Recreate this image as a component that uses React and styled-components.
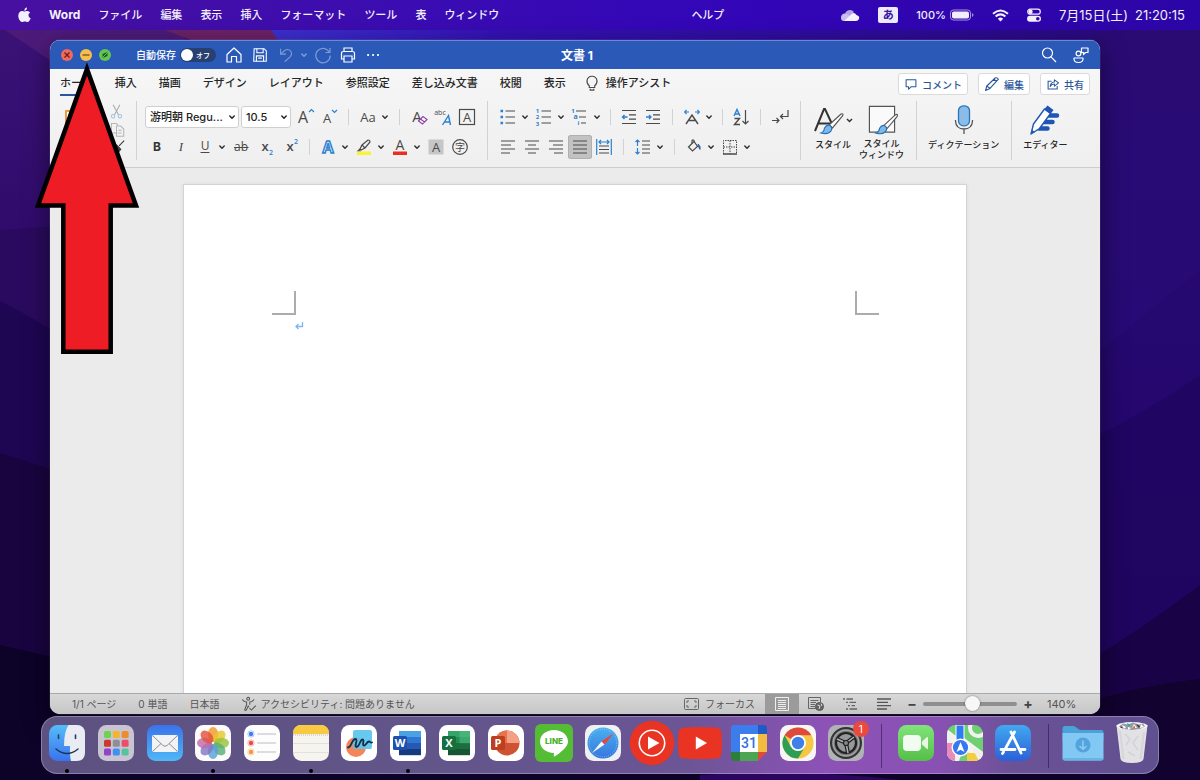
import React, { useState } from "react";
import styled, { createGlobalStyle, css } from "styled-components";

const GlobalStyle = createGlobalStyle`
  * {
    box-sizing: border-box;
  }

  body {
    margin: 0;
    background: #12042f;
    font-family: Inter, "Noto Sans CJK JP", sans-serif;
  }

  button, select, input {
    font-family: inherit;
    margin: 0;
  }
`;

const DARK = "#4a4a4a";
const BLUE = "#2b80d0";
const NAVY = "#2b579a";

/* ---------- desktop ---------- */

const Desktop = styled.div`
  position: relative;
  z-index: 0;
  display: flex;
  flex-direction: column;
  min-height: 100vh;
  overflow: hidden;
`;

const WallpaperSvg = styled.svg`
  position: absolute;
  inset: 0;
  z-index: -1;
  width: 100%;
  height: 100%;
`;

const ArrowSvg = styled.svg`
  position: absolute;
  left: 34px;
  top: 60px;
  pointer-events: none;
`;

/* ---------- menu bar ---------- */

const MenuBar = styled.header`
  display: flex;
  align-items: center;
  justify-content: space-between;
  height: 30px;
  padding: 0 15px 0 18px;
  background: linear-gradient(90deg, #4810a0, #3a0cb2 35%, #3306b8 60%, #2c05a6);
  color: #f3effc;
`;

const MenuGroup = styled.nav`
  display: flex;
  align-items: center;
  gap: 18px;
`;

const MenuButton = styled.button`
  padding: 0;
  border: none;
  background: none;
  color: inherit;
  font-size: ${(p) => (p.$app ? 12 : 11)}px;
  font-weight: ${(p) => (p.$app ? 700 : 500)};
  line-height: 16px;
  white-space: nowrap;
`;

const HelpButton = styled(MenuButton)`
  margin-left: 174px;
`;

const StatusGroup = styled.div`
  display: flex;
  align-items: center;
  gap: 18px;
  font-weight: 500;
  white-space: nowrap;

  svg {
    display: block;
  }
`;

const InputMode = styled.span`
  width: 20px;
  height: 16px;
  border-radius: 2px;
  background: #f0ebfb;
  color: #3a12a8;
  font-family: "Noto Sans CJK JP", sans-serif;
  font-size: 11px;
  font-weight: 700;
  line-height: 15px;
  text-align: center;
`;

const Battery = styled.span`
  display: flex;
  align-items: center;
  gap: 4px;
  font-size: 11px;
`;

const Clock = styled.time`
  display: flex;
  align-items: baseline;
  gap: 7px;
  font-size: 13px;
  font-weight: 400;
  line-height: 16px;
`;

/* ---------- window ---------- */

const Window = styled.main`
  flex: 1;
  display: flex;
  flex-direction: column;
  margin: 10px 100px 2px 50px;
  border-radius: 10px;
  overflow: hidden;
  background: #ebebeb;
  box-shadow: 0 0 1px #c9c4e0, 0 8px 26px rgba(0, 0, 0, 0.5);
`;

const TitleBar = styled.div`
  display: grid;
  grid-template-columns: 1fr auto 1fr;
  align-items: center;
  height: 29px;
  padding: 0 7px 0 11px;
  background: #2b59b8;
  box-shadow: inset 0 1px #6d88cf;
  color: #fff;
`;

const TitleSide = styled.div`
  display: flex;
  align-items: center;
  justify-content: ${(p) => (p.$end ? "flex-end" : "flex-start")};
  gap: ${(p) => p.$gap || 0}px;
`;

const Lights = styled.div`
  display: flex;
  gap: 7px;
  margin-right: 25px;
`;

const Light = styled.button`
  display: block;
  width: 12px;
  height: 12px;
  padding: 0;
  border: none;
  border-radius: 50%;
  background: ${(p) => p.$color};

  svg {
    display: block;
  }
`;

const SaveLabel = styled.label`
  display: flex;
  align-items: center;
  gap: 4px;
  margin-right: 6px;
  font-size: 10px;
  font-weight: 500;
  white-space: nowrap;
`;

const Switch = styled.button`
  display: flex;
  align-items: center;
  gap: 3px;
  width: 36px;
  height: 14px;
  padding: 0 1px;
  border: none;
  border-radius: 7px;
  background: #28406f;
  color: #fff;
  font-size: 7px;
  font-weight: 500;

  &::before {
    content: "";
    width: 12px;
    height: 12px;
    border-radius: 50%;
    background: #fff;
  }
`;

const BarButton = styled.button`
  display: flex;
  align-items: center;
  justify-content: center;
  width: ${(p) => p.$w || 24}px;
  height: 24px;
  padding: 0;
  border: none;
  background: none;
  color: #fff;
  opacity: ${(p) => (p.$dim ? 0.4 : 1)};
`;

const DocTitle = styled.h1`
  margin: 0;
  font-size: 12px;
  font-weight: 700;
`;

/* ---------- ribbon ---------- */

const Ribbon = styled.section`
  border-bottom: 1px solid #cdcdcd;
  background: linear-gradient(#f6f6f6, #efefef);
  color: #262626;
`;

const TabRow = styled.div`
  display: flex;
  align-items: flex-start;
  justify-content: space-between;
  height: 30px;
  padding: 4px 10px 0;
`;

const TabArea = styled.div`
  display: flex;
  gap: 17px;
  padding-top: 1px;
`;

const Tabs = styled.div`
  display: flex;
  gap: 22px;
`;

const Tab = styled.button`
  display: flex;
  align-items: center;
  gap: 5px;
  height: 22px;
  padding: 0 0 2px;
  border: none;
  border-bottom: 2px solid ${(p) => (p.$active ? NAVY : "transparent")};
  background: none;
  color: #262626;
  font-size: 11px;
  font-weight: 500;
  line-height: 18px;
  white-space: nowrap;
`;

const Actions = styled.div`
  display: flex;
  gap: 10px;
`;

const ActionButton = styled.button`
  display: flex;
  align-items: center;
  gap: 4px;
  height: 22px;
  padding: 0 5px;
  border: 1px solid #dadada;
  border-radius: 3px;
  background: #fff;
  color: ${NAVY};
  font-size: 10px;
  font-weight: 500;
  white-space: nowrap;
`;

const Tools = styled.div`
  display: flex;
  height: 68px;
  padding: 2px 0 7px;
`;

const Group = styled.div`
  display: flex;
  flex-direction: column;
  justify-content: space-between;
  padding: ${(p) => p.$pad || "4px 0 1px 8px"};
  border-right: 1px solid #d2d2d2;
  ${(p) => p.$w && css`width: ${p.$w}px;`}
`;

const BigGroup = styled.div`
  display: flex;
  gap: 5px;
  padding: ${(p) => p.$pad || "0 12px 0 11px"};
  border-right: ${(p) => (p.$last ? "none" : "1px solid #d2d2d2")};
`;

const ToolRow = styled.div`
  display: flex;
  align-items: center;
  height: 24px;
`;

const Cluster = styled.div`
  display: flex;
  align-items: center;
  gap: ${(p) => p.$gap || 0}px;

  > svg {
    flex: none;
  }
`;

const IconStack = styled.div`
  display: flex;
  flex-direction: column;
  gap: 1px;
`;

const ToolButton = styled.button`
  display: flex;
  align-items: center;
  justify-content: center;
  width: 24px;
  height: 24px;
  padding: 0;
  border: none;
  border-radius: 3px;
  background: ${(p) => (p.$on ? "#c2c2c2" : "none")};
  box-shadow: ${(p) => (p.$on ? "inset 0 0 0 1px #b0b0b0" : "none")};
`;

const CaretButton = styled.button`
  display: flex;
  align-items: center;
  width: 12px;
  height: 24px;
  padding: 0 0 0 1px;
  border: none;
  background: none;
  color: #333;
`;

const Rule = styled.span`
  width: 1px;
  height: 16px;
  margin: 0 ${(p) => p.$m || 6}px;
  background: #d2d2d2;
`;

const SelectBox = styled.span`
  position: relative;
  display: block;
  width: ${(p) => p.$w}px;
  margin-right: 2px;

  select {
    appearance: none;
    display: block;
    width: 100%;
    height: 22px;
    padding: 0 14px 0 4px;
    border: 1px solid #cfcfcf;
    border-radius: 3px;
    background: #fff;
    color: #222;
    font-size: 11px;
    font-weight: 500;
  }

  svg {
    position: absolute;
    right: 3px;
    top: 7px;
    pointer-events: none;
  }
`;

const BigButton = styled.button`
  display: flex;
  flex-direction: column;
  align-items: center;
  gap: 2px;
  min-width: 42px;
  padding: 4px 0 0;
  border: none;
  background: none;
  color: #262626;
  font-size: 9px;
  font-weight: 500;
  line-height: 11px;
  white-space: nowrap;
`;

/* ---------- document ---------- */

const Canvas = styled.section`
  flex: 1;
  display: flex;
  padding: 17px 134px 0;
`;

const Page = styled.article`
  flex: 1;
  padding: 106px 87px 0 88px;
  background: #fff;
  box-shadow: 0 0 0 1px #d3d3d3, 0 0 4px #cfcfcf;
`;

const CropMarks = styled.div`
  display: flex;
  justify-content: space-between;
`;

const Corner = styled.span`
  width: 24px;
  height: 24px;
  border-bottom: 2px solid #acacac;
  ${(p) => (p.$left ? "border-right" : "border-left")}: 2px solid #acacac;
`;

const FirstLine = styled.p`
  margin: 6px 0 0 22px;
  line-height: 0;
`;

const StatusBar = styled.footer`
  display: flex;
  justify-content: space-between;
  height: 21px;
  padding: 0 19px 0 22px;
  border-top: 1px solid #a9a9a9;
  background: linear-gradient(#d8d8d8, #c6c6c6);
  color: #555;
`;

const StatusSide = styled.div`
  display: flex;
  align-items: center;
  gap: ${(p) => p.$gap || 0}px;
`;

const StatusButton = styled.button`
  display: flex;
  align-items: center;
  gap: 3px;
  padding: 0;
  border: none;
  background: none;
  color: inherit;
  font-size: 10px;
  line-height: 14px;
  white-space: nowrap;
`;

const FocusButton = styled(StatusButton)`
  gap: 6px;
  margin-right: 10px;
`;

const ViewButton = styled.button`
  display: flex;
  align-items: center;
  justify-content: center;
  width: 34px;
  height: 20px;
  padding: 0;
  border: none;
  background: ${(p) => (p.$on ? "#9b9b9b" : "none")};
`;

const StepButton = styled.button`
  width: 22px;
  padding: 0;
  border: none;
  background: none;
  color: #444;
  font-size: 14px;
  font-weight: 700;
  line-height: 20px;
`;

const ZoomRange = styled.input`
  appearance: none;
  width: 94px;
  height: 16px;
  background: none;

  &::-webkit-slider-runnable-track {
    height: 4px;
    border-radius: 2px;
    background: #8f8f8f;
  }

  &::-webkit-slider-thumb {
    appearance: none;
    width: 15px;
    height: 15px;
    margin-top: -6px;
    border-radius: 50%;
    background: #f7f7f7;
    box-shadow: 0 0 2px rgba(0, 0, 0, 0.5);
  }
`;

const ZoomValue = styled.output`
  width: 34px;
  margin-left: 8px;
  font-size: 11px;
  line-height: 14px;
`;

/* ---------- dock ---------- */

const DockBar = styled.nav`
  display: flex;
  height: 58px;
  margin: 0 41px 6px;
  padding: 1px 2px 0 1px;
  border: 1px solid rgba(255, 255, 255, 0.28);
  border-radius: 16px;
  background: linear-gradient(90deg, #5d5180, #61558a 35%, #6c5596 58%, #8c52b6 70%, #8a51b5 80%, #6b5296 87%, #5f5090);
`;

const DockButton = styled.button`
  position: relative;
  flex: 1;
  display: flex;
  flex-direction: column;
  align-items: center;
  min-width: 0;
  padding: 1px 0 0;
  border: none;
  background: none;

  svg {
    display: block;
    flex: none;
  }
`;

const RunningDot = styled.span`
  width: 4px;
  height: 4px;
  margin-top: 2px;
  border-radius: 50%;
  background: #000;
`;

const Badge = styled.span`
  position: absolute;
  top: 3px;
  right: 2px;
  width: 16px;
  height: 16px;
  border-radius: 50%;
  background: #ea4a3e;
  color: #fff;
  font-size: 10px;
  line-height: 16px;
  text-align: center;
`;

const DockRule = styled.span`
  width: 1px;
  height: 44px;
  margin: 6px 10px;
  background: rgba(30, 10, 60, 0.5);
`;

/* ---------- drawings ---------- */

const Wallpaper = () => (
  <WallpaperSvg viewBox="0 0 1200 780" preserveAspectRatio="none" aria-hidden="true">
    <defs>
      <linearGradient id="wallLeft" x1="0" y1="0" x2="0" y2="1">
        <stop offset="0" stopColor="#3c1378" />
        <stop offset="1" stopColor="#2b0866" />
      </linearGradient>
      <linearGradient id="wallBlue" x1="0" y1="0" x2="1" y2="0">
        <stop offset="0" stopColor="#3c30cf" />
        <stop offset="0.25" stopColor="#3411b4" />
        <stop offset="0.7" stopColor="#2d0b96" />
        <stop offset="1" stopColor="#280a74" />
      </linearGradient>
      <linearGradient id="wallRight" x1="0" y1="0" x2="0" y2="1">
        <stop offset="0" stopColor="#2a0b74" />
        <stop offset="0.4" stopColor="#270a75" />
        <stop offset="1" stopColor="#210558" />
      </linearGradient>
    </defs>
    <rect width="1200" height="780" fill="#0d0328" />
    <path d="M0 0H400V330H0Z" fill="url(#wallLeft)" />
    <path d="M5 30L60 67L200 67L180 30Z" fill="#4c1b7a" />
    <path d="M165 30H280L300 67H260Z" fill="#6b2268" />
    <path d="M271 30H1200V60H292Z" fill="url(#wallBlue)" />
    <path d="M0 230L60 226V340H0Z" fill="#2a0a5e" />
    <path d="M0 301Q30 316 60 335V480H0Z" fill="#1f0653" />
    <path d="M0 453L60 472V670H0Z" fill="#190440" />
    <path d="M0 645L60 659V780H0Z" fill="#0d0228" />
    <path d="M1090 35Q1110 28 1200 30V780H1090Z" fill="url(#wallRight)" />
    <path d="M1090 360Q1150 310 1200 270V780H1090Z" fill="#24076c" fillOpacity="0.6" />
    <path d="M1090 440Q1150 410 1200 375V780H1090Z" fill="#1c0457" fillOpacity="0.5" />
    <path d="M1090 660Q1140 630 1200 585V780H1090Z" fill="#190346" />
    <path d="M1080 705Q1140 685 1200 679V780H1080Z" fill="#12022f" />
    <path d="M700 775Q800 768 900 780H700Z" fill="#2a0660" />
  </WallpaperSvg>
);

const RedArrow = () => (
  <ArrowSvg width="106" height="296" viewBox="0 0 106 296" aria-hidden="true">
    <path
      d="M53 9L102 145.500H76.700V291.700H29.300V145.500H4Z"
      fill="#ee1c25"
      stroke="#000"
      strokeWidth="4.500"
      strokeMiterlimit="10"
    />
  </ArrowSvg>
);

const Caret = () => (
  <svg width="8" height="8" viewBox="0 0 8 8" fill="none" stroke="currentColor" strokeWidth="1.500" strokeLinecap="round" strokeLinejoin="round">
    <path d="M1.800 3L4 5.200L6.200 3" />
  </svg>
);

// 20x20 line drawing used all over the ribbon
const Glyph = ({ size = 20, color = DARK, width = 1.2, children }) => (
  <svg width={size} height={size} viewBox="0 0 20 20" fill="none" stroke={color} strokeWidth={width} aria-hidden="true">
    {children}
  </svg>
);

const T = ({ x = 10, y, size, fill = DARK, weight = 400, family = "Open Sans", italic, children }) => (
  <text
    x={x}
    y={y}
    fontSize={size}
    fontWeight={weight}
    fontStyle={italic ? "italic" : "normal"}
    fontFamily={`"${family}", "Noto Sans CJK JP", sans-serif`}
    fill={fill}
    stroke="none"
    textAnchor="middle"
  >
    {children}
  </text>
);

const glyphs = {
  grow: <><T x={8} y={16} size={16}>A</T><path d="M14 5L16.500 2.500L19 5" stroke={BLUE} /></>,
  shrink: <><T x={8} y={16} size={13}>A</T><path d="M13 3L15.500 5.500L18 3" stroke={BLUE} /></>,
  case: <T x={10} y={15} size={13}>Aa</T>,
  clear: <><T x={8} y={15} size={15}>A</T><path d="M9.500 14L14 9.500L18 12.500L13.500 17ZM11.500 12L15.500 15" stroke="#9440a8" fill="#fff" /></>,
  abc: <><T x={7} y={8} size={7}>abc</T><path d="M9.500 18L15.500 8.500L17.500 18M11.500 15H17" stroke={BLUE} strokeWidth="1.400" /></>,
  boxed: <><rect x="2.500" y="2.500" width="15" height="15" /><T y={15} size={13}>A</T></>,
  bold: <T y={14} size={12} weight={700} fill="#333" family="Inter">B</T>,
  italic: <T y={14} size={13} family="Liberation Serif" italic>I</T>,
  underline: <><T y={13} size={12}>U</T><path d="M5.500 15.500H14.500" /></>,
  strike: <><T y={14} size={12}>ab</T><path d="M3 10.500H17.500" /></>,
  sub: <><T x={9} y={14} size={13} weight={600}>x</T><T x={15} y={18} size={7} fill={BLUE} weight={600}>2</T></>,
  sup: <><T x={9} y={14} size={13} weight={600}>x</T><T x={15} y={7} size={7} fill={BLUE} weight={600}>2</T></>,
  effects: <text x="10" y="16" fontSize="16" fontWeight="700" fontFamily="Open Sans" fill="#eaf3fb" stroke={BLUE} strokeWidth="1.400" textAnchor="middle">A</text>,
  marker: <><path d="M6 12L8 8L14 3Q16 3 16 5L11 11L7 13Z" /><path d="M8 8L11 11M6 12L4 14H7" /><rect x="3" y="14.500" width="14" height="3.500" fill="#fbf335" stroke="none" /></>,
  fontColor: <><T y={13} size={14}>A</T><rect x="3" y="14.500" width="14" height="3.500" fill="#ee2b22" stroke="none" /></>,
  shade: <><rect x="2.500" y="2.500" width="15" height="15" fill="#c6c6c6" stroke="none" /><T y={15} size={13}>A</T></>,
  circled: <><circle cx="10" cy="10" r="7.300" /><T y={14} size={10}>字</T></>,
  bullets: <><path d="M7.500 4H17M7.500 10H17M7.500 16H17" /><path d="M2.500 2.700h2.600v2.600h-2.600zM2.500 8.700h2.600v2.600h-2.600zM2.500 14.700h2.600v2.600h-2.600z" fill={BLUE} stroke="none" /></>,
  numbers: <><path d="M7.500 4H17M7.500 10H17M7.500 16H17" /><T x={3.500} y={6} size={6} weight={700} fill={BLUE}>1</T><T x={3.500} y={12} size={6} weight={700} fill={BLUE}>2</T><T x={3.500} y={18.500} size={6} weight={700} fill={BLUE}>3</T></>,
  multi: <><path d="M6 4H16M9 10H16M11 16H16" /><T x={3} y={6} size={6} weight={700} fill={BLUE}>1</T><T x={5.500} y={12} size={7} weight={700} fill={BLUE}>a</T><T x={8.500} y={18} size={6} weight={700} fill={BLUE}>i</T></>,
  outdent: <><path d="M3 3.500H17M10 7.800H17M10 12.200H17M3 16.500H17" /><path d="M8.500 10H3.500M5.500 8L3.500 10L5.500 12" stroke={BLUE} strokeWidth="1.400" /></>,
  indent: <><path d="M3 3.500H17M10 7.800H17M10 12.200H17M3 16.500H17" /><path d="M3 10H8M6 8L8 10L6 12" stroke={BLUE} strokeWidth="1.400" /></>,
  fit: <><path d="M4 17L10 8L16 17M6.500 13.500H13.500" strokeWidth="1.400" /><path d="M7 5H3M4.500 3L2.700 5L4.500 7M13 5H17M15.500 3L17.300 5L15.500 7" stroke={BLUE} /></>,
  sort: <><path d="M3 9L6 2.500L9 9M4 7H8" stroke={BLUE} strokeWidth="1.400" /><path d="M3.500 11.500H8.500L3.500 17.500H9" strokeWidth="1.400" /><path d="M14.500 3V17M11.500 14L14.500 17L17.500 14" /></>,
  marks: <path d="M2 13.500H9M6.500 11L9 13.500L6.500 16M18 3V9.500H10.500M13 7L10.500 9.500L13 12" />,
  left: <path d="M3 4H17M3 8H13M3 12H17M3 16H12" />,
  center: <path d="M3 4H17M6 8H14M3 12H17M6 16H14" />,
  right: <path d="M3 4H17M7 8H17M3 12H17M8 16H17" />,
  justify: <path d="M3 4H17M3 8H17M3 12H17M3 16H17" />,
  spread: <><path d="M5 9H15M5 12.500H15M5 16H15" /><path d="M2.700 2V18M17.300 2V18M5 5H15M7 3L5 5L7 7M13 3L15 5L13 7" stroke={BLUE} /></>,
  spacing: <><path d="M9 4H17M9 8H17M9 12H17M9 16H17" /><path d="M4.500 3V9M2.500 5L4.500 3L6.500 5M4.500 11V17M2.500 15L4.500 17L6.500 15" stroke={BLUE} /></>,
  bucket: <><path d="M4.500 10L10 4.500L13.500 9.500L8.500 14Z" /><path d="M8 6.500V3.500Q9.500 2 10.500 4.500" /><path d="M14 7Q17 9 16 12.500Q14.500 11 14 7Z" fill={BLUE} stroke="#2a4f88" strokeWidth="0.800" /></>,
  borders: <><path d="M3.500 17V3.500H16.500V17M10 3.500V17M3.500 10H16.500" strokeDasharray="1.500 1" strokeWidth="1" /><path d="M3 17H17" strokeWidth="1.600" /></>,
};

const strokes = {
  home: <path d="M3 9.500L10 3L17 9.500V17H12.500V11.500H7.500V17H3Z" strokeLinejoin="round" />,
  save: <><path d="M3.500 3H14.500L17 5.500V17H3Z" /><path d="M6.500 3V7.500H13.500V3M6 17V11H14V17M8 13.500H12" /></>,
  undo: <><path d="M4 3V9H10" /><path d="M4 9L8.500 5Q12 2.500 15 5.500Q17.500 9 14.500 12L8.500 17.500" /></>,
  redo: <><path d="M17 3V7.500H12.500" /><path d="M16.500 7.500A7.200 7.200 0 1 0 17.200 10.500" /></>,
  print: <><path d="M6 6.500V3H14V6.500M6 14H3.500V8.500Q3.500 6.500 5.500 6.500H14.500Q16.500 6.500 16.500 8.500V14H14" /><path d="M6 11H14V17H6Z" /></>,
  more: <path d="M4.500 10H4.600M10 10H10.100M15.500 10H15.600" strokeWidth="2.400" strokeLinecap="round" />,
  search: <><circle cx="8.500" cy="8" r="5" /><path d="M12 11.800L17 17" /></>,
  person: <><circle cx="7.500" cy="8.500" r="2.400" /><path d="M3 13H12Q12.500 17.500 7.500 17.500T3 13Z" strokeLinejoin="round" /><path d="M10.500 3H17V7.500H14.500L12.500 9.500V7.500H10.500Z" strokeLinejoin="round" /></>,
  bulb: <><path d="M7 13Q4 10.500 4.500 7Q5.500 2.500 10 2.500T15.500 7Q16 10.500 13 13V15H7Z" /><path d="M7.500 18H12.500M8 16.500V18M12 16.500V18" /></>,
  comment: <path d="M3 4H17V14H10L6.500 17.500V14H3Z" strokeLinejoin="round" />,
  pencil: <path d="M2 18L3.500 12.500L14 2.500Q16.500 1.500 18 4L7.500 15.500ZM3.500 12.500L7.500 15.500M12.500 4L16 7" strokeLinejoin="round" />,
  share: <><path d="M8 6H3V17H16V13" /><path d="M12 7V4L18 8.500L12 13V10Q8 10 6 13.500Q6.500 7.500 12 7Z" strokeLinejoin="round" /></>,
  cut: <><path d="M6 2L12.500 14M14 2L7.500 14" stroke="#a9a9a9" /><circle cx="6" cy="15.500" r="2" stroke="#9cc4ea" /><circle cx="14" cy="15.500" r="2" stroke="#9cc4ea" /></>,
  copy: <path d="M11 14H4V3H10L12 5M10 6H15L18.500 9.500V18H10ZM12 11H16M12 14H16" stroke="#b5b5b5" />,
  brush: <path d="M19 2L13 8M10 7L15 12L11 17L5 11Z" stroke="#333" fill="#444" />,
};

const AppleLogo = () => (
  <svg width="13" height="16" viewBox="0 0 13 16" fill="#f3effc" aria-hidden="true">
    <path d="M9 0.500C9.200 2.300 7.800 3.900 6.300 3.800C6.100 2.200 7.500 0.700 9 0.500ZM6.500 4.600C7.200 4.600 8 3.900 9.300 4C10.500 4.100 11.500 4.600 12.100 5.500C9.700 7 10.100 10.200 12.700 11.200C12.100 12.900 10.900 15 9.500 15C8.400 15 8.100 14.400 6.800 14.400C5.500 14.400 5.100 15 4.100 15C2.200 15 0.300 11.800 0.300 8.800C0.300 5.800 2.200 4.100 4.100 4.100C5.200 4.100 5.900 4.600 6.500 4.600Z" />
  </svg>
);

const StatusIcons = {
  cloud: (
    <svg width="20" height="14" viewBox="0 0 20 14" aria-hidden="true">
      <path d="M5 7A5 5 0 0 1 14 4L9 9Z" fill="#b7a2e6" />
      <path d="M1 10A4 4 0 0 1 5 5.500Q8 5.500 11 9L6 13H4Q1 13 1 10Z" fill="#cabdf0" />
      <path d="M4 13L11 6.500Q14 3.500 16.500 7Q20 8 19 11Q18 13 16 13Z" fill="#f5f1fd" />
    </svg>
  ),
  battery: (
    <svg width="24" height="12" viewBox="0 0 24 12" aria-hidden="true">
      <rect x="0.500" y="1" width="20" height="10" rx="3" fill="none" stroke="#a594dd" />
      <rect x="2" y="2.500" width="17" height="7" rx="1.800" fill="#f3effc" />
      <path d="M22 4V8Q23.500 7 23.500 6T22 4Z" fill="#a594dd" />
    </svg>
  ),
  wifi: (
    <svg width="17" height="13" viewBox="0 0 17 13" fill="none" stroke="#f3effc" strokeWidth="2" aria-hidden="true">
      <path d="M1 4.800Q8.500 -1.800 16 4.800M3.600 7.500Q8.500 3.300 13.400 7.500" />
      <path d="M8.500 12.500L5.800 9.700Q8.500 7.500 11.200 9.700Z" fill="#f3effc" stroke="none" />
    </svg>
  ),
  control: (
    <svg width="14" height="14" viewBox="0 0 14 14" aria-hidden="true">
      <rect x="0.700" y="1.200" width="12.600" height="5" rx="2.500" fill="none" stroke="#f3effc" strokeWidth="1.200" />
      <circle cx="3.500" cy="3.700" r="2.200" fill="#f3effc" />
      <rect x="0" y="7.800" width="14" height="6" rx="3" fill="#f3effc" />
      <circle cx="10.800" cy="10.800" r="1.800" fill="#3106ae" />
    </svg>
  ),
};

const Paintbrush = () => (
  <g>
    <path d="M17 20L29 9Q32 8 30.500 11L20.500 23Z" fill="#fff" stroke="#555" />
    <path d="M9 28Q12 27 12.500 23Q15 19 18 20.500Q21 23 19 26Q16 30 9 28Z" fill="#7db8e8" stroke="#2b70b5" />
  </g>
);

const bigIcons = {
  styles: (
    <svg width="42" height="32" viewBox="0 0 42 32" fill="none" strokeWidth="1.200" aria-hidden="true">
      <path d="M3 26L12 4H13L20 19M6 18.500H18" stroke="#333" strokeWidth="2" />
      <Paintbrush />
      <path d="M35 14L37.500 16.500L40 14" stroke="#333" strokeWidth="1.500" />
    </svg>
  ),
  pane: (
    <svg width="36" height="32" viewBox="0 0 36 32" fill="none" strokeWidth="1.200" aria-hidden="true">
      <path d="M5 1.500H31V28H5Z" fill="#fafafa" stroke="#555" />
      <g transform="translate(3 1)"><Paintbrush /></g>
    </svg>
  ),
  mic: (
    <svg width="24" height="32" viewBox="0 0 24 32" fill="none" strokeWidth="1.300" aria-hidden="true">
      <rect x="6.500" y="0.800" width="11" height="20" rx="5" fill="#8bbce8" stroke="#2b74bd" />
      <path d="M3.500 15V16Q4 24 12 24T20.500 16V15M12 24V29" stroke="#555" />
    </svg>
  ),
  editor: (
    <svg width="32" height="32" viewBox="0 0 32 32" aria-hidden="true">
      <path d="M16 10.500H28M13 17H23.500M10 23.500H18.500" stroke="#1f55b5" strokeWidth="4.500" strokeLinecap="round" />
      <path d="M2 29L4.500 19L15.500 4L21.500 8.500L10.500 23.500Z" fill="#fff" stroke="#1f55b5" strokeWidth="1.400" strokeLinejoin="round" />
      <path d="M15 4.500L18.500 0.500L24.500 5L21.500 9Z" fill="#1f55b5" />
      <path d="M2 29L3 25L6 27Z" fill="#1f55b5" />
    </svg>
  ),
};

const Tile = ({ fill, stroke }) => <rect x="6" y="6" width="36" height="36" rx="8.500" fill={fill} stroke={stroke} />;

const petals = ["#f29a2e", "#e8c62c", "#98c23c", "#58ae78", "#58a2d8", "#8377c4", "#c06aa8", "#e4523c"];

const OfficeTile = ({ letter, color, bands, round }) => (
  <>
    <Tile fill="#fff" />
    {round ? (
      <>
        <circle cx="25" cy="24" r="12.500" fill="#cf5233" />
        <path d="M25 11.500A12.500 12.500 0 0 1 37.500 24H25Z" fill="#f4a084" />
        <path d="M25 11.500A12.500 12.500 0 0 0 12.500 24H25Z" fill="#e87250" />
      </>
    ) : (
      bands.map((b, i) => <rect key={b} x="15" y={12 + i * 6} width="22" height="6.200" fill={b} />)
    )}
    <rect x="9" y="17" width="14" height="14" rx="1.500" fill={color} />
    <T x={16} y={28} size={11} weight={700} fill="#fff">{letter}</T>
  </>
);

const dockArt = {
  finder: (
    <>
      <Tile fill="url(#finderBlue)" />
      <path d="M25.500 6H33.500Q42 6 42 14.500V33.500Q42 42 33.500 42H28Q26.500 36 27 27H21Q21 13 25.500 6Z" fill="#e9ecf2" />
      <path d="M15.500 16V19.500M32.500 16V19.500" stroke="#23405e" strokeWidth="1.600" strokeLinecap="round" />
      <path d="M13 30Q24 39 35 30" fill="none" stroke="#1b3450" strokeWidth="1.400" strokeLinecap="round" />
    </>
  ),
  launchpad: (
    <>
      <Tile fill="#c8c4d2" />
      {["#6cd44e", "#f4b52e", "#ee8b2b", "#c93a32", "#8c8f96", "#ec4d68", "#9243c8", "#3e90f2", "#55c3a0"].map((c, i) => (
        <rect key={c} x={12 + (i % 3) * 8.800} y={12 + Math.floor(i / 3) * 8.800} width="7" height="7" rx="1.600" fill={c} />
      ))}
    </>
  ),
  mail: (
    <>
      <Tile fill="url(#mailBlue)" />
      <rect x="11" y="16" width="26" height="17" rx="2" fill="#f3f3f3" />
      <path d="M12 17L22 26.500Q24 28 26 26.500L36 17M12 32L20 24.500M36 32L28 24.500" fill="none" stroke="#8a9099" />
    </>
  ),
  photos: (
    <>
      <Tile fill="#fbfbfb" />
      {petals.map((c, i) => (
        <ellipse key={c} cx="24" cy="15.500" rx="5.200" ry="7.500" fill={c} fillOpacity="0.82" transform={`rotate(${i * 45} 24 24)`} />
      ))}
    </>
  ),
  reminders: (
    <>
      <Tile fill="#fdfdfd" />
      {["#3d7df0", "#e94b40", "#ef9a35"].map((c, i) => (
        <g key={c}>
          <circle cx="13" cy={15 + i * 9} r="2.200" fill={c} />
          <circle cx="13" cy={15 + i * 9} r="3.200" fill="none" stroke={c} strokeOpacity="0.5" strokeWidth="0.800" />
          <path d={`M19 ${15 + i * 9}H38`} stroke="#bdbdbd" />
        </g>
      ))}
    </>
  ),
  notes: (
    <>
      <Tile fill="#f5f4ef" />
      <path d="M6 15V14.500Q6 6 14.500 6H33.500Q42 6 42 14.500V15Z" fill="#f8ca42" />
      <path d="M6 16H42" stroke="#b5b0a4" strokeDasharray="1 1" strokeWidth="0.800" />
      <path d="M6 24.500H42M6 33.500H42" stroke="#dddbd4" strokeWidth="0.800" />
    </>
  ),
  freeform: (
    <>
      <Tile fill="#fff" />
      <circle cx="21" cy="28" r="10" fill="#f38558" />
      <rect x="18" y="11" width="19" height="19" rx="2" fill="#5cc5ee" fillOpacity="0.93" />
      <path
        d="M13 28.500C16.500 28.500 17 19.500 20.500 20C23.500 20.500 18.500 28 21.500 28C24.500 28 25 20.500 27.500 20.500C30 20.500 26.500 26.500 29 26.500C31.500 26.500 31.500 22.500 34 22.500C35.500 22.500 35 24 37 23.500"
        fill="none"
        stroke="#10304a"
        strokeWidth="1.800"
        strokeLinecap="round"
      />
    </>
  ),
  word: <OfficeTile letter="W" color="#1e4fae" bands={["#4ba0e6", "#2f78d2", "#2459b5", "#163a80"]} />,
  excel: (
    <>
      <OfficeTile letter="X" color="#14713f" bands={["#35a468", "#238c50", "#1a6e40", "#175533"]} />
      <path d="M26.500 12H37V18.200H26.500ZM26.500 18H37V24.200H26.500Z" fill="#58c48a" fillOpacity="0.5" />
    </>
  ),
  powerpoint: <OfficeTile letter="P" color="#bd3f1f" round />,
  line: (
    <>
      <rect x="5" y="5" width="38" height="38" rx="6" fill="#55bc35" />
      <path d="M24 11C32 11 38 16 38 22.500C38 27.500 31 33.500 24.500 37.500Q23.300 38 24 34C16 34 10 29 10 22.500C10 16 16 11 24 11Z" fill="#fff" />
      <T x={24} y={25} size={8} weight={800} fill="#48b02c" family="Inter">LINE</T>
    </>
  ),
  safari: (
    <>
      <Tile fill="#eef0f2" />
      <circle cx="24" cy="24" r="15.500" fill="url(#safariBlue)" />
      <circle cx="24" cy="24" r="13.800" fill="none" stroke="#d6ecfb" strokeOpacity="0.700" strokeDasharray="0.600 1.600" />
      <path d="M35 14L25.500 25.500L22.500 22.500Z" fill="#ee4439" />
      <path d="M13 34L22.500 22.500L25.500 25.500Z" fill="#f7f7f7" />
    </>
  ),
  music: (
    <>
      <circle cx="24" cy="24" r="22.300" fill="#e93323" />
      <circle cx="24" cy="24" r="12.700" fill="none" stroke="#fff" strokeWidth="1.600" />
      <path d="M20 17.500L31.500 24L20 30.500Z" fill="#fff" />
    </>
  ),
  youtube: (
    <>
      <path d="M8 8.500Q24 7.500 40 8.500Q44.500 9 45.500 13Q46.500 24 45.500 35Q44.500 39 40 39.500Q24 40.500 8 39.500Q3.500 39 2.500 35Q1.500 24 2.500 13Q3.500 9 8 8.500Z" fill="#e93323" />
      <path d="M19.800 17.500L31 24L19.800 30.500Z" fill="#fff" />
    </>
  ),
  calendar: (
    <>
      <path d="M15 6H33V15H15V42H15V33H6V9Q6 6 9 6Z" fill="#3b7ded" />
      <path d="M6 33H15V42H9Q6 42 6 39Z" fill="#2c7f3a" />
      <path d="M33 6H39Q42 6 42 9V15H33Z" fill="#1e5cc4" />
      <path d="M33 15H42V33H33Z" fill="#f4bb42" />
      <path d="M15 33H33V42H15Z" fill="#4ba551" />
      <path d="M33 33H42L33 42Z" fill="#dc4a3c" />
      <rect x="15" y="15" width="18" height="18" fill="#fff" />
      <T x={24} y={29} size={14} fill="#2f70e2" weight={500} family="Roboto">31</T>
    </>
  ),
  chrome: (
    <>
      <Tile fill="#f6f6f6" />
      <circle cx="24" cy="24" r="15.500" fill="#f6c744" />
      <path d="M24 24L10.600 16.200A15.500 15.500 0 0 1 37.400 16.200H24Z" fill="#dd4b3e" />
      <path d="M10.600 16.200A15.500 15.500 0 0 0 24 39.500L30.800 28L17 28Z" fill="#2f9e55" />
      <circle cx="24" cy="24" r="8" fill="#fff" />
      <circle cx="24" cy="24" r="6.200" fill="#3f7fe8" />
    </>
  ),
  settings: (
    <>
      <Tile fill="#b1b2b5" />
      <circle cx="24" cy="24" r="15" fill="#77787b" stroke="#333" strokeWidth="2" />
      <circle cx="24" cy="24" r="12.800" fill="none" stroke="#a8a9ab" strokeWidth="1.200" />
      <circle cx="24" cy="24" r="10" fill="#97989a" stroke="#222" strokeWidth="2.200" />
      <path d="M24 24L15 20M24 24L32 18M24 24L26 34" stroke="#222" strokeWidth="4" />
      <path d="M24 24L15 20M24 24L32 18M24 24L26 34" stroke="#b0b1b3" strokeWidth="1.500" />
      <circle cx="24" cy="24" r="2.500" fill="#88898b" stroke="#222" strokeWidth="1.200" />
    </>
  ),
  facetime: (
    <>
      <Tile fill="url(#facetimeGreen)" />
      <rect x="11" y="16" width="18" height="16" rx="4" fill="#f2fbef" />
      <path d="M30 22.500L35 18Q36 17.500 36 19V29Q36 30.500 35 30L30 25.500Z" fill="#e6f7e2" />
    </>
  ),
  maps: (
    <>
      <defs><clipPath id="mapTile"><rect x="6" y="6" width="36" height="36" rx="8.500" /></clipPath></defs>
      <g clipPath="url(#mapTile)">
        <rect x="6" y="6" width="36" height="36" fill="#6fcf71" />
        <path d="M6 10L24 24L18 42H6Z" fill="#f1f1ee" />
        <path d="M6 24H14V42H6Z" fill="#e88bb8" />
        <path d="M22 18L42 33V42H30Z" fill="#f4f4f2" />
        <path d="M26 34H42V42H26Z" fill="#f5cd45" />
        <path d="M30 27L42 34V42H38Z" fill="#eef0ee" />
        <circle cx="37" cy="9" r="8" fill="none" stroke="#f0f1f0" strokeWidth="4" />
        <path d="M15 6H23V24H15Z" fill="#2d7cf2" stroke="#fff" />
      </g>
      <circle cx="19.500" cy="28.500" r="9" fill="#fff" />
      <circle cx="19.500" cy="28.500" r="7.600" fill="#3578f0" />
      <path d="M19.500 23L23.500 33L19.500 30.800L15.500 33Z" fill="#fff" />
    </>
  ),
  appstore: (
    <>
      <Tile fill="url(#storeBlue)" />
      <path d="M25.500 13L16.500 29.500M22 13L32 34M12 30.500H26M31 30.500H36M14.500 33L13.500 34.500" fill="none" stroke="#fff" strokeWidth="2.800" strokeLinecap="round" />
    </>
  ),
  folder: (
    <>
      <path d="M3.500 10Q3.500 7 6 7H14Q16 7 18 9T22 11H42Q44.500 11 44.500 13V22H3.500Z" fill="#4ba2d8" />
      <path d="M3.500 14H44.500V39Q44.500 41.500 42 41.500H6Q3.500 41.500 3.500 39Z" fill="#82c8f4" />
      <path d="M3.500 39V39.500Q3.500 41.500 6 41.500H42Q44.500 41.500 44.500 39.500V39Z" fill="#68b4e4" />
      <circle cx="24" cy="26" r="7.600" fill="#53a3dc" />
      <path d="M24 21.500V30M20.500 27L24 30.300L27.500 27" fill="none" stroke="#90cdf5" strokeWidth="1.500" />
    </>
  ),
  trash: (
    <>
      <path d="M8.500 6L12.500 40Q13.500 44 24 44T35.500 40L39.500 6Z" fill="#e2e2e5" />
      <path d="M12 12L15.500 40M36 13L32.500 40" stroke="#cfcfd4" strokeWidth="2" opacity="0.600" />
      <path d="M17 15L22 20L18 26M30 17L25 24L30 31M20 33L27 37" fill="none" stroke="#cdccd0" strokeWidth="1.500" opacity="0.700" />
      <ellipse cx="24" cy="7" rx="15.500" ry="4" fill="#f4f4f6" />
      <path d="M11 7.500L15 4.500L20 5.500L25 3.500L31 5.500L35 4.500L37 7.500L32 10L24 11L15 10Z" fill="#9a9ca4" />
      <path d="M14 6L18 8L16 10ZM26 5L29 9L24 9ZM33 5L36 8L32 9ZM20 8L23 9L20 11Z" fill="#fff" />
      <path d="M19 4L23 6L20 8Z" fill="#3ea3aa" />
      <path d="M28 5L32 7L31 9Z" fill="#3a3338" />
      <path d="M12 7L15 9L13 9Z" fill="#33292c" />
      <path d="M24 8L27 7L27 10Z" fill="#c8743c" />
    </>
  ),
};

const DockGradients = () => (
  <svg width="0" height="0" aria-hidden="true">
    <defs>
      {[
        ["finderBlue", "#55bdf8", "#3a72ee"],
        ["mailBlue", "#3b72ea", "#4fb8f6"],
        ["safariBlue", "#4bb0ee", "#3577de"],
        ["facetimeGreen", "#80e47a", "#55bf48"],
        ["storeBlue", "#42a8f0", "#2b60d8"],
      ].map(([id, from, to]) => (
        <linearGradient key={id} id={id} x1="0" y1="0" x2="0" y2="1">
          <stop offset="0" stopColor={from} />
          <stop offset="1" stopColor={to} />
        </linearGradient>
      ))}
    </defs>
  </svg>
);

/* ---------- data ---------- */

const menus = ["ファイル", "編集", "表示", "挿入", "フォーマット", "ツール", "表", "ウィンドウ"];
const tabs = ["ホーム", "挿入", "描画", "デザイン", "レイアウト", "参照設定", "差し込み文書", "校閲", "表示"];

const dockItems = [
  { id: "finder", label: "Finder", running: true },
  { id: "launchpad", label: "Launchpad" },
  { id: "mail", label: "メール" },
  { id: "photos", label: "写真", running: true },
  { id: "reminders", label: "リマインダー" },
  { id: "notes", label: "メモ", running: true },
  { id: "freeform", label: "フリーボード" },
  { id: "word", label: "Word", running: true },
  { id: "excel", label: "Excel" },
  { id: "powerpoint", label: "PowerPoint" },
  { id: "line", label: "LINE" },
  { id: "safari", label: "Safari" },
  { id: "music", label: "YouTube Music" },
  { id: "youtube", label: "YouTube" },
  { id: "calendar", label: "カレンダー" },
  { id: "chrome", label: "Chrome" },
  { id: "settings", label: "システム設定", badge: 1 },
  { id: "rule1", rule: true },
  { id: "facetime", label: "FaceTime" },
  { id: "maps", label: "マップ" },
  { id: "appstore", label: "App Store" },
  { id: "rule2", rule: true },
  { id: "folder", label: "ダウンロード" },
  { id: "trash", label: "ゴミ箱" },
];

/* ---------- parts ---------- */

const Tool = ({ name, label, caret, on, onClick }) => (
  <>
    <ToolButton type="button" aria-label={label} aria-pressed={on} $on={on} onClick={onClick}>
      <Glyph>{glyphs[name]}</Glyph>
    </ToolButton>
    {caret && <CaretButton type="button" aria-label={`${label}のオプション`}><Caret /></CaretButton>}
  </>
);

const TopMenu = () => (
  <MenuBar>
    <MenuGroup>
      <AppleLogo />
      <MenuButton $app>Word</MenuButton>
      {menus.map((m) => <MenuButton key={m}>{m}</MenuButton>)}
      <HelpButton>ヘルプ</HelpButton>
    </MenuGroup>
    <StatusGroup>
      {StatusIcons.cloud}
      <InputMode>あ</InputMode>
      <Battery>100% {StatusIcons.battery}</Battery>
      {StatusIcons.wifi}
      {StatusIcons.control}
      <Clock><span>7月15日(土)</span><span>21:20:15</span></Clock>
    </StatusGroup>
  </MenuBar>
);

const WindowTitle = () => {
  const [autoSave, setAutoSave] = useState(false);

  return (
    <TitleBar>
      <TitleSide>
        <Lights>
          <Light $color="#ed6a5e" aria-label="閉じる">
            <svg width="12" height="12" viewBox="0 0 12 12"><path d="M3.500 3.500L8.500 8.500M8.500 3.500L3.500 8.500" stroke="#7c1712" strokeWidth="1.300" /></svg>
          </Light>
          <Light $color="#f5bf4f" aria-label="しまう">
            <svg width="12" height="12" viewBox="0 0 12 12"><path d="M2.500 6H9.500" stroke="#8f5a1b" strokeWidth="1.400" /></svg>
          </Light>
          <Light $color="#62c554" aria-label="フルスクリーン">
            <svg width="12" height="12" viewBox="0 0 12 12"><path d="M3.500 8.500V5L7 3.500H8.500V7L5 8.500Z" fill="#1c5c16" /><path d="M3.500 8.500L8.500 3.500" stroke="#62c554" /></svg>
          </Light>
        </Lights>
        <SaveLabel>
          自動保存
          <Switch role="switch" aria-checked={autoSave} onClick={() => setAutoSave(!autoSave)}>
            {autoSave ? "オン" : "オフ"}
          </Switch>
        </SaveLabel>
        <BarButton aria-label="ホーム"><Glyph size={20} color="#fff">{strokes.home}</Glyph></BarButton>
        <BarButton $w={28} aria-label="保存"><Glyph size={18} color="#fff">{strokes.save}</Glyph></BarButton>
        <BarButton $dim aria-label="元に戻す"><Glyph size={18} color="#fff">{strokes.undo}</Glyph></BarButton>
        <BarButton $dim $w={12} aria-label="元に戻すの一覧"><Caret /></BarButton>
        <BarButton $dim $w={26} aria-label="やり直し"><Glyph size={20} color="#fff">{strokes.redo}</Glyph></BarButton>
        <BarButton aria-label="印刷"><Glyph size={20} color="#fff">{strokes.print}</Glyph></BarButton>
        <BarButton $w={26} aria-label="その他"><Glyph size={18} color="#fff">{strokes.more}</Glyph></BarButton>
      </TitleSide>
      <DocTitle>文書 1</DocTitle>
      <TitleSide $end $gap={8}>
        <BarButton aria-label="検索"><Glyph size={20} color="#fff">{strokes.search}</Glyph></BarButton>
        <BarButton aria-label="共同作業"><Glyph size={20} color="#fff">{strokes.person}</Glyph></BarButton>
      </TitleSide>
    </TitleBar>
  );
};

const RibbonPanel = () => {
  const [tab, setTab] = useState("ホーム");
  const [align, setAlign] = useState("justify");

  return (
    <Ribbon>
      <TabRow>
        <TabArea>
          <Tabs>
            {tabs.map((t) => <Tab key={t} $active={t === tab} onClick={() => setTab(t)}>{t}</Tab>)}
          </Tabs>
          <Tab>
            <Glyph size={18} width={1.3}>{strokes.bulb}</Glyph>
            操作アシスト
          </Tab>
        </TabArea>
        <Actions>
          <ActionButton><Glyph size={14} color={NAVY} width={1.5}>{strokes.comment}</Glyph>コメント</ActionButton>
          <ActionButton><Glyph size={16} color={NAVY} width={1.4}>{strokes.pencil}</Glyph>編集</ActionButton>
          <ActionButton><Glyph size={14} color={NAVY} width={1.5}>{strokes.share}</Glyph>共有</ActionButton>
        </Actions>
      </TabRow>

      <Tools>
        <Group $w={87} $pad="2px 0 2px 12px">
          <Cluster $gap={10}>
            <svg width="36" height="44" viewBox="0 0 36 44" fill="none" aria-hidden="true">
              <path d="M4 3H22V26H4Z" stroke="#ef9a3c" strokeWidth="2" fill="#fff" />
              <path d="M12 12H28V34H12Z" stroke="#777" fill="#fff" />
            </svg>
            <IconStack>
              <Glyph size={17}>{strokes.cut}</Glyph>
              <Glyph size={17}>{strokes.copy}</Glyph>
              <Glyph size={17}>{strokes.brush}</Glyph>
            </IconStack>
          </Cluster>
        </Group>

        <Group $w={351}>
          <ToolRow>
            <SelectBox $w={94}>
              <select aria-label="フォント" defaultValue="yu"><option value="yu">游明朝 Regu...</option></select>
              <Caret />
            </SelectBox>
            <SelectBox $w={50}>
              <select aria-label="フォント サイズ" defaultValue="10.5"><option>10.5</option><option>12</option></select>
              <Caret />
            </SelectBox>
            <Tool name="grow" label="フォント サイズの拡大" />
            <Tool name="shrink" label="フォント サイズの縮小" />
            <Rule $m={7} />
            <Tool name="case" label="文字種の変換" caret />
            <Rule $m={7} />
            <Tool name="clear" label="書式のクリア" />
            <Tool name="abc" label="ルビ" />
            <Tool name="boxed" label="囲み線" />
          </ToolRow>
          <ToolRow>
            <Cluster>
              <Tool name="bold" label="太字" />
              <Tool name="italic" label="斜体" />
              <Tool name="underline" label="下線" caret />
            </Cluster>
            <Cluster $gap={1}>
              <Tool name="strike" label="取り消し線" />
              <Tool name="sub" label="下付き" />
              <Tool name="sup" label="上付き" />
            </Cluster>
            <Rule />
            <Tool name="effects" label="文字の効果" caret />
            <Tool name="marker" label="蛍光ペン" caret />
            <Tool name="fontColor" label="フォントの色" caret />
            <Tool name="shade" label="文字の網かけ" />
            <Tool name="circled" label="囲い文字" />
          </ToolRow>
        </Group>

        <Group $w={313}>
          <ToolRow>
            <Tool name="bullets" label="箇条書き" caret />
            <Tool name="numbers" label="段落番号" caret />
            <Tool name="multi" label="アウトライン" caret />
            <Rule />
            <Tool name="outdent" label="インデント解除" />
            <Tool name="indent" label="インデント" />
            <Rule $m={7} />
            <Tool name="fit" label="拡張書式" caret />
            <Rule />
            <Tool name="sort" label="並べ替え" />
            <Rule $m={7} />
            <Tool name="marks" label="編集記号" />
          </ToolRow>
          <ToolRow>
            <Tool name="left" label="左揃え" on={align === "left"} onClick={() => setAlign("left")} />
            <Tool name="center" label="中央揃え" on={align === "center"} onClick={() => setAlign("center")} />
            <Tool name="right" label="右揃え" on={align === "right"} onClick={() => setAlign("right")} />
            <Tool name="justify" label="両端揃え" on={align === "justify"} onClick={() => setAlign("justify")} />
            <Tool name="spread" label="均等割り付け" on={align === "spread"} onClick={() => setAlign("spread")} />
            <Rule $m={7} />
            <Tool name="spacing" label="行間" caret />
            <Rule $m={7} />
            <Tool name="bucket" label="塗りつぶし" caret />
            <Tool name="borders" label="罫線" caret />
          </ToolRow>
        </Group>

        <BigGroup>
          <BigButton>{bigIcons.styles}スタイル</BigButton>
          <BigButton>{bigIcons.pane}<span>スタイル<br />ウィンドウ</span></BigButton>
        </BigGroup>
        <BigGroup>
          <BigButton>{bigIcons.mic}ディクテーション</BigButton>
        </BigGroup>
        <BigGroup $last>
          <BigButton>{bigIcons.editor}エディター</BigButton>
        </BigGroup>
      </Tools>
    </Ribbon>
  );
};

const BottomStatus = () => {
  const [zoom, setZoom] = useState(140);
  const step = (n) => setZoom(Math.min(255, Math.max(10, zoom + n)));

  return (
    <StatusBar>
      <StatusSide $gap={22}>
        <StatusButton>1/1 ページ</StatusButton>
        <StatusButton>0 単語</StatusButton>
        <StatusButton>日本語</StatusButton>
        <StatusButton>
          <Glyph size={16} color="#555" width={1.3}>
            <circle cx="9" cy="3.500" r="1.800" />
            <path d="M2 4Q2 6.500 7 7.500V11L4.500 17.500Q6 19 7 17L9 12.500L10 14M16 4Q16 6.500 11 7.500V11M10.500 15L13 17.500L18.500 12" />
          </Glyph>
          アクセシビリティ: 問題ありません
        </StatusButton>
      </StatusSide>
      <StatusSide>
        <FocusButton>
          <svg width="15" height="12" viewBox="0 0 15 12" fill="none" stroke="#666" aria-hidden="true">
            <rect x="0.500" y="0.500" width="14" height="11" rx="1" />
            <path d="M3 5V3H5M10 3H12V5M12 7V9H10M5 9H3V7" />
          </svg>
          フォーカス
        </FocusButton>
        <ViewButton $on aria-label="印刷レイアウト">
          <svg width="14" height="14" viewBox="0 0 14 14" fill="none" stroke="#eee"><path d="M0.500 0.500H13.500V13.500H0.500ZM3 3.500H11M3 5.500H11M3 7.500H11M3 9.500H11M3 11.500H11" /></svg>
        </ViewButton>
        <ViewButton aria-label="Web レイアウト">
          <svg width="16" height="14" viewBox="0 0 16 14" fill="none" stroke="#666"><path d="M8 11.500H0.500V0.500H12.500V5M2.500 3.500H10.500M2.500 5.500H8M2.500 7.500H7M2.500 9.500H7" /><circle cx="11.500" cy="9.500" r="4" fill="#666" stroke="#555" /><path d="M9.500 8L12 9L11 12M13 6.500L14 9" stroke="#ddd" /></svg>
        </ViewButton>
        <ViewButton aria-label="アウトライン">
          <svg width="14" height="12" viewBox="0 0 14 12" stroke="#666" strokeWidth="1.300"><path d="M0 1H2M3.500 1H10M3 4.300H5M6.500 4.300H13M5 7.600H7M8.500 7.600H12M3 11H5M6.500 11H14" /></svg>
        </ViewButton>
        <ViewButton aria-label="下書き">
          <svg width="14" height="12" viewBox="0 0 14 12" stroke="#555" strokeWidth="1.300"><path d="M0 1H14M0 4.300H11M0 7.600H14M0 11H10" /></svg>
        </ViewButton>
        <StepButton aria-label="縮小" onClick={() => step(-10)}>−</StepButton>
        <ZoomRange type="range" min="10" max="255" value={zoom} aria-label="ズーム" onChange={(e) => setZoom(Number(e.target.value))} />
        <StepButton aria-label="拡大" onClick={() => step(10)}>+</StepButton>
        <ZoomValue>{zoom}%</ZoomValue>
      </StatusSide>
    </StatusBar>
  );
};

const Dock = () => (
  <DockBar>
    {dockItems.map((item) =>
      item.rule ? (
        <DockRule key={item.id} />
      ) : (
        <DockButton key={item.id} type="button" aria-label={item.label}>
          <svg width="48" height="48" viewBox="0 0 48 48" aria-hidden="true">{dockArt[item.id]}</svg>
          {item.running && <RunningDot />}
          {item.badge && <Badge>{item.badge}</Badge>}
        </DockButton>
      )
    )}
  </DockBar>
);

const App = () => (
  <>
    <GlobalStyle />
    <Desktop>
      <Wallpaper />
      <TopMenu />
      <Window>
        <WindowTitle />
        <RibbonPanel />
        <Canvas>
          <Page>
            <CropMarks>
              <Corner $left />
              <Corner />
            </CropMarks>
            <FirstLine>
              <svg width="10" height="10" viewBox="0 0 10 10" fill="none" stroke="#7db4f2" strokeWidth="1.300" aria-hidden="true">
                <path d="M8.500 1V5.500H2M4.500 3L2 5.500L4.500 8" />
              </svg>
            </FirstLine>
          </Page>
        </Canvas>
        <BottomStatus />
      </Window>
      <Dock />
      <DockGradients />
      <RedArrow />
    </Desktop>
  </>
);

export default App;
